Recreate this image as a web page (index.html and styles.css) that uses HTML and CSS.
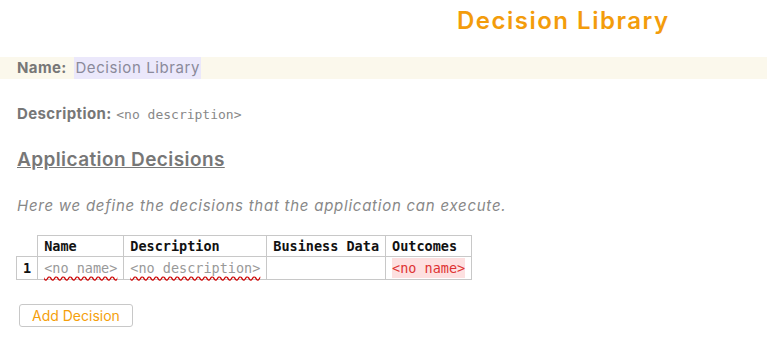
FILE: index.html
```html
<!DOCTYPE html>
<html lang="en">
<head>
    <meta charset="UTF-8">
    <meta name="viewport" content="width=device-width, initial-scale=1.0">
    <title>Decision Library</title>
    <link rel="stylesheet" href="styles.css">
</head>
<body>
    <h1 class="title">Decision Library</h1>

    <div class="name-row">
        <span class="label">Name:</span>
        <span class="name-value">Decision Library</span>
    </div>

    <div class="desc-row">
        <span class="label">Description:</span>
        <span class="mono-empty">&lt;no description&gt;</span>
    </div>

    <h2 class="section">Application Decisions</h2>
    <p class="intro">Here we define the decisions that the application can execute.</p>

    <table class="decisions">
        <thead>
            <tr>
                <th class="idx"></th>
                <th>Name</th>
                <th>Description</th>
                <th>Business Data</th>
                <th>Outcomes</th>
            </tr>
        </thead>
        <tbody>
            <tr>
                <td class="idx">1</td>
                <td><span class="empty squiggle">&lt;no name&gt;</span></td>
                <td><span class="empty squiggle">&lt;no description&gt;</span></td>
                <td></td>
                <td><span class="error">&lt;no name&gt;</span></td>
            </tr>
        </tbody>
    </table>

    <button type="button" class="add-btn">Add Decision</button>
</body>
</html>
```

FILE: styles.css
```css
body {
    margin: 0;
    padding: 0;
    font-family: Inter, "Open Sans", sans-serif;
    letter-spacing: 0.4px;
    color: #777;
    background-color: #fff;
}
.title {
    margin: 6px 0 0 457px;
    font-size: 24px;
    font-weight: 600;
    line-height: 30px;
    letter-spacing: 1.5px;
    color: #f39c0b;
}
.name-row {
    margin-top: 21px;
    padding-left: 17px;
    height: 22px;
    line-height: 22px;
    background-color: #fbf8ec;
    font-size: 15px;
}
.label {
    font-weight: 700;
    color: #777;
}
.name-value {
    margin-left: 3px;
    padding: 0 1px;
    display: inline-block;
    background-color: #ebe8fb;
    color: #8a8a9a;
    letter-spacing: 0.6px;
}
.desc-row {
    margin-top: 25px;
    padding-left: 17px;
    font-size: 15px;
}
.mono-empty {
    font-family: "DejaVu Sans Mono", monospace;
    font-size: 13px;
    letter-spacing: 0;
    color: #888;
}
.section {
    margin: 25px 0 0 17px;
    font-size: 19px;
    font-weight: 600;
    text-decoration: underline;
    color: #777;
}
.intro {
    margin: 25px 0 0 17px;
    font-size: 15px;
    font-style: italic;
    letter-spacing: 0.75px;
    color: #888;
}
.decisions {
    margin: 20px 0 0 16px;
    border-collapse: collapse;
    font-family: "DejaVu Sans Mono", monospace;
    font-size: 13.5px;
    letter-spacing: 0;
}
.decisions th,
.decisions td {
    border: 1px solid #c8c8c8;
    padding: 2px 6px;
    text-align: left;
    line-height: 16px;
}
.decisions td {
    padding: 3px 6px;
}
.decisions th {
    color: #111;
    font-weight: 700;
}
.decisions th.idx {
    border-top: none;
    border-left: none;
}
.decisions td.idx {
    color: #111;
    font-weight: 700;
    text-align: center;
}
.empty {
    color: #999;
}
.squiggle {
    text-decoration: underline wavy #c00;
    text-underline-offset: 3px;
}
.error {
    color: #d33;
    background-color: #fde0e0;
    padding: 2px 0;
}
.add-btn {
    margin: 24px 0 0 19px;
    padding: 2px 12px;
    font-family: Inter, "Open Sans", sans-serif;
    font-size: 14px;
    color: #f5a00b;
    background-color: #fff;
    border: 1px solid #c8c8c8;
    border-radius: 3px;
}
```
